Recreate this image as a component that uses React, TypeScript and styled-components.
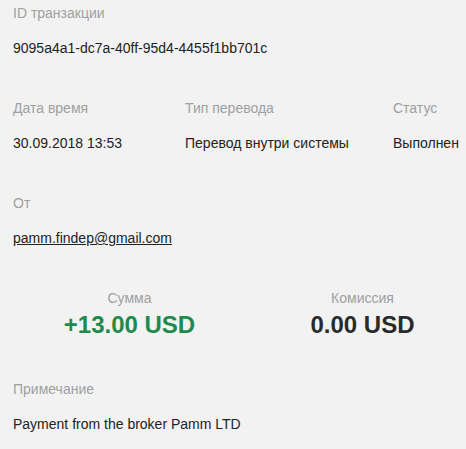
import * as React from 'react'
import styled, { createGlobalStyle } from 'styled-components'

const GlobalStyle = createGlobalStyle`
  html, body {
    margin: 0;
    padding: 0;
    background: #f2f2f2;
    overflow: hidden;
  }
`

const StyledDetails = styled.div`
  width: 466px;
  padding: 3px 0 0 13px;
  font-family: 'Liberation Sans', Arial, sans-serif;
  font-size: 14px;
  line-height: 20px;
  color: #222222;
  display: flex;
  flex-direction: column;
  gap: 40px;
`

const Field = styled.div<{ $centered?: boolean }>`
  display: flex;
  flex-direction: column;
  gap: ${(p) => (p.$centered ? '3px' : '15px')};
  align-items: ${(p) => (p.$centered ? 'center' : 'flex-start')};
  white-space: nowrap;
`

const Label = styled.div`
  color: #a0a0a0;
`

const Value = styled.div``

const Email = styled.a`
  color: #222222;
  text-decoration: underline;
`

const InfoRow = styled.div`
  display: grid;
  grid-template-columns: 172px 208px 1fr;
`

const AmountRow = styled.div`
  display: grid;
  grid-template-columns: 1fr 1fr;
`

const Amount = styled.div<{ $positive?: boolean }>`
  font-size: 24px;
  line-height: 28px;
  font-weight: bold;
  color: ${(p) => (p.$positive ? '#1e8a4c' : '#2a2a2a')};
`

const App: React.FunctionComponent = () => (
  <>
    <GlobalStyle />
    <StyledDetails>
      <Field>
        <Label>ID транзакции</Label>
        <Value>9095a4a1-dc7a-40ff-95d4-4455f1bb701c</Value>
      </Field>
      <InfoRow>
        <Field>
          <Label>Дата время</Label>
          <Value>30.09.2018 13:53</Value>
        </Field>
        <Field>
          <Label>Тип перевода</Label>
          <Value>Перевод внутри системы</Value>
        </Field>
        <Field>
          <Label>Статус</Label>
          <Value>Выполнен</Value>
        </Field>
      </InfoRow>
      <Field>
        <Label>От</Label>
        <Email href='mailto:pamm.findep@gmail.com'>pamm.findep@gmail.com</Email>
      </Field>
      <AmountRow>
        <Field $centered>
          <Label>Сумма</Label>
          <Amount $positive>+13.00 USD</Amount>
        </Field>
        <Field $centered>
          <Label>Комиссия</Label>
          <Amount>0.00 USD</Amount>
        </Field>
      </AmountRow>
      <Field>
        <Label>Примечание</Label>
        <Value>Payment from the broker Pamm LTD</Value>
      </Field>
    </StyledDetails>
  </>
)

export default App
